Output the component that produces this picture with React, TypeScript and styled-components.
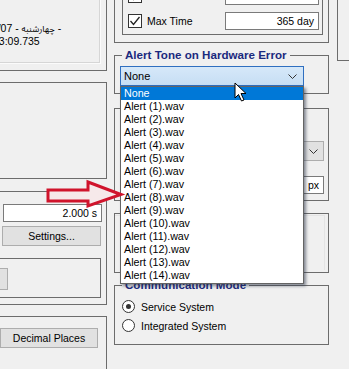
import React from "react";
import styled, { createGlobalStyle } from "styled-components";

const Global = createGlobalStyle`
  html, body { margin: 0; padding: 0; background: #f0f0f0; }
  body {
    width: 349px; height: 369px; overflow: hidden;
    font-family: "Liberation Sans", "DejaVu Sans", Arial, sans-serif;
    font-size: 10.5px; color: #000;
  }
`;

const Screen = styled.div`
  position: relative;
  width: 349px;
  height: 369px;
  overflow: hidden;
  display: flex;
  align-items: flex-start;
  background: #f0f0f0;
`;

const LeftCol = styled.div`
  flex: none;
  width: 137px;
  margin-left: -30px;
  display: flex;
  flex-direction: column;
`;

const RightCol = styled.div`
  flex: none;
  width: 215px;
  margin-left: 7px;
  display: flex;
  flex-direction: column;
`;

const FarCol = styled.div`
  flex: none;
  width: 40px;
  margin-left: 8px;
  display: flex;
  flex-direction: column;
`;

const Frame = styled.div<{ $gap: number; $height: number }>`
  box-sizing: border-box;
  margin-top: ${(p) => p.$gap}px;
  height: ${(p) => p.$height}px;
  border: 1px solid #6c6c6c;
  display: flex;
  flex-direction: column;
`;

const DateFrame = styled(Frame)`
  padding: 0 5px 6px 0;
`;

const Etched = styled.div`
  flex: 1;
  border: 1px solid #fbfbfb;
  box-shadow: inset -1px -1px 0 #d6d6d6;
  padding-top: 30px;
  display: flex;
  flex-direction: column;
  overflow: hidden;
`;

const DateLine = styled.div<{ $shift: number }>`
  height: 13px;
  line-height: 13px;
  white-space: nowrap;
  margin-left: ${(p) => p.$shift}px;
  direction: ltr;
  unicode-bidi: isolate;
`;

const Persian = styled.span`
  font-family: "Noto Sans Arabic", "Noto Naskh Arabic", "DejaVu Sans Condensed", "DejaVu Sans", sans-serif;
  font-size: 9px;
  font-stretch: condensed;
`;

const TextBox = styled.div<{ $width: number; $height?: number; $left?: number; $top?: number }>`
  box-sizing: border-box;
  width: ${(p) => p.$width}px;
  height: ${(p) => p.$height ?? 18}px;
  margin-left: ${(p) => p.$left ?? 0}px;
  margin-top: ${(p) => p.$top ?? 0}px;
  background: #fff;
  border: 1px solid #7a7a7a;
  padding-right: 4px;
  display: flex;
  align-items: center;
  justify-content: flex-end;
  white-space: nowrap;
  overflow: hidden;
`;

const Button = styled.div<{ $width: number; $height: number; $left: number; $top: number }>`
  box-sizing: border-box;
  width: ${(p) => p.$width}px;
  height: ${(p) => p.$height}px;
  margin-left: ${(p) => p.$left}px;
  margin-top: ${(p) => p.$top}px;
  background: #e1e1e1;
  border: 1px solid #adadad;
  display: flex;
  align-items: center;
  justify-content: center;
  white-space: nowrap;
`;

const InnerGroup = styled.div`
  box-sizing: border-box;
  width: 121px;
  height: 40px;
  margin-left: 9px;
  margin-top: 12px;
  border: 1px solid #6c6c6c;
  padding-top: 9px;
`;

/* right column */
const LimitsFrame = styled(Frame)`
  padding: 10px 5px 7px 7px;
`;

const LimitsInner = styled.div`
  flex: 1;
  border: 1px solid #6c6c6c;
  padding: 6px 3px 4px 5px;
  display: flex;
  flex-direction: column;
  gap: 7px;
`;

const LimitRow = styled.div`
  height: 18px;
  display: flex;
  align-items: center;
`;

const CheckBox = styled.div`
  box-sizing: border-box;
  width: 14px;
  height: 14px;
  border: 1px solid #333;
  background: #fff;
  display: flex;
  align-items: center;
  justify-content: center;
`;

const RowLabel = styled.span`
  margin-left: 5px;
  white-space: nowrap;
`;

const Spacer = styled.div`
  flex: 1;
`;

const Title = styled.div`
  align-self: flex-start;
  margin: -8px 0 0 7px;
  padding: 0 3px;
  height: 14px;
  line-height: 14px;
  background: #f0f0f0;
  color: #1b2a7e;
  font-weight: bold;
  font-size: 11.6px;
  white-space: nowrap;
`;

const ComboWrap = styled.div`
  position: relative;
  margin: 4px 0 0 5px;
  width: 184px;
  height: 20px;
`;

const ComboOpen = styled.div`
  box-sizing: border-box;
  width: 100%;
  height: 100%;
  border: 1px solid #2f6fc0;
  background: linear-gradient(#d6e8f9, #c6def4);
  display: flex;
  align-items: center;
  padding: 0 6px 0 3px;
  font-size: 11px;
`;

const ComboText = styled.span`
  flex: 1;
`;

const DropList = styled.div`
  position: absolute;
  top: 100%;
  left: 0;
  box-sizing: border-box;
  width: 100%;
  background: #fff;
  border: 1px solid #646464;
  padding-bottom: 1px;
  box-shadow: 2px 2px 3px rgba(40, 50, 70, 0.55);
  z-index: 5;
`;

const ListItem = styled.div<{ $selected?: boolean }>`
  height: 13px;
  line-height: 13px;
  padding-left: 3px;
  white-space: nowrap;
  font-size: 10.7px;
  background: ${(p) => (p.$selected ? "#0078d7" : "transparent")};
  color: ${(p) => (p.$selected ? "#fff" : "#000")};
`;

const ComboGray = styled.div`
  box-sizing: border-box;
  align-self: flex-end;
  margin: 32px 4px 0 0;
  width: 110px;
  height: 20px;
  background: #e1e1e1;
  border: 1px solid #adadad;
  display: flex;
  align-items: center;
  justify-content: flex-end;
  padding-right: 5px;
`;

const PxBox = styled(TextBox)`
  align-self: flex-end;
  margin-right: 4px;
`;

const FaintPanel = styled.div`
  flex: 1;
  margin: 1px 3px 2px 0;
  border-top: 1px solid #e4e4e4;
  border-right: 1px solid #e4e4e4;
`;

const RadioRow = styled.div<{ $top: number }>`
  height: 19px;
  margin-top: ${(p) => p.$top}px;
  display: flex;
  align-items: center;
  padding-left: 7px;
`;

const Radio = styled.div<{ $checked?: boolean }>`
  box-sizing: border-box;
  width: 13px;
  height: 13px;
  border-radius: 50%;
  border: 1px solid #333;
  background: #fff;
  display: flex;
  align-items: center;
  justify-content: center;
  &::after {
    content: "";
    width: 5px;
    height: 5px;
    border-radius: 50%;
    background: ${(p) => (p.$checked ? "#333" : "transparent")};
  }
`;

const RadioLabel = styled.span`
  margin-left: 6px;
  white-space: nowrap;
`;

const RedArrow = styled.svg`
  position: absolute;
  left: 44px;
  top: 175px;
  z-index: 6;
`;

const Cursor = styled.svg`
  position: absolute;
  left: 234px;
  top: 82px;
  z-index: 7;
`;

const Chevron = () => (
  <svg width="9" height="5" viewBox="0 0 9 5">
    <polyline points="0.5,0.5 4.5,4.5 8.5,0.5" fill="none" stroke="#333" strokeWidth="1" />
  </svg>
);

const Check = () => (
  <svg width="12" height="12" viewBox="0 0 12 12">
    <polyline points="1.5,6 4.5,9.5 10.5,2" fill="none" stroke="#222" strokeWidth="1.3" />
  </svg>
);

const items = ["None", ...Array.from({ length: 14 }, (_, i) => `Alert (${i + 1}).wav`)];

export default function App() {
  return (
    <>
      <Global />
      <Screen>
        <LeftCol>
          <DateFrame $gap={-10} $height={81}>
            <Etched>
              <DateLine $shift={14}>
                02/07 - <Persian>چهارشنبه</Persian> -
              </DateLine>
              <DateLine $shift={21}>03:09.735</DateLine>
            </Etched>
          </DateFrame>
          <Frame $gap={11} $height={97} />
          <Frame $gap={12} $height={114} style={{ paddingTop: 12 }}>
            <TextBox $width={99} $left={32}>2.000 s</TextBox>
            <Button $width={99} $height={20} $left={31} $top={4}>Settings...</Button>
            <InnerGroup>
              <Button $width={27} $height={22} $left={0} $top={0} />
            </InnerGroup>
          </Frame>
          <Frame $gap={11} $height={70}>
            <Button $width={98} $height={20} $left={29} $top={11}>Decimal Places</Button>
          </Frame>
        </LeftCol>

        <RightCol>
          <LimitsFrame $gap={-31} $height={74}>
            <LimitsInner>
              <LimitRow>
                <CheckBox><Check /></CheckBox>
                <RowLabel>Max Size</RowLabel>
                <Spacer />
                <TextBox $width={94}>1.000 GB</TextBox>
              </LimitRow>
              <LimitRow>
                <CheckBox><Check /></CheckBox>
                <RowLabel>Max Time</RowLabel>
                <Spacer />
                <TextBox $width={94}>365 day</TextBox>
              </LimitRow>
            </LimitsInner>
          </LimitsFrame>

          <Frame $gap={12} $height={39}>
            <Title>Alert Tone on Hardware Error</Title>
            <ComboWrap>
              <ComboOpen>
                <ComboText>None</ComboText>
                <Chevron />
              </ComboOpen>
              <DropList>
                {items.map((t, i) => (
                  <ListItem key={t} $selected={i === 0}>{t}</ListItem>
                ))}
              </DropList>
            </ComboWrap>
          </Frame>

          <Frame $gap={14} $height={93}>
            <ComboGray><Chevron /></ComboGray>
            <PxBox $width={110} $top={15}>px</PxBox>
          </Frame>

          <Frame $gap={12} $height={60}>
            <FaintPanel />
          </Frame>

          <Frame $gap={12} $height={60}>
            <Title>Communication Mode</Title>
            <RadioRow $top={5}>
              <Radio $checked />
              <RadioLabel>Service System</RadioLabel>
            </RadioRow>
            <RadioRow $top={0}>
              <Radio />
              <RadioLabel>Integrated System</RadioLabel>
            </RadioRow>
          </Frame>
        </RightCol>

        <FarCol>
          <Frame $gap={-10} $height={71} />
        </FarCol>

        <RedArrow width="82" height="38" viewBox="0 0 82 38">
          <polygon
            points="4,15 44,15 44,7 77,19.5 44,31 44,26 4,26"
            fill="#f6e9ea"
            stroke="#d0142c"
            strokeWidth="3"
            strokeLinejoin="miter"
          />
        </RedArrow>

        <Cursor width="14" height="21" viewBox="0 0 14 21">
          <polygon
            points="1,1 1,16 4.5,12.5 7.5,19 10,18 7,11.5 12,11.5"
            fill="#fff"
            stroke="#000"
            strokeWidth="1"
            strokeLinejoin="round"
          />
        </Cursor>
      </Screen>
    </>
  );
}
